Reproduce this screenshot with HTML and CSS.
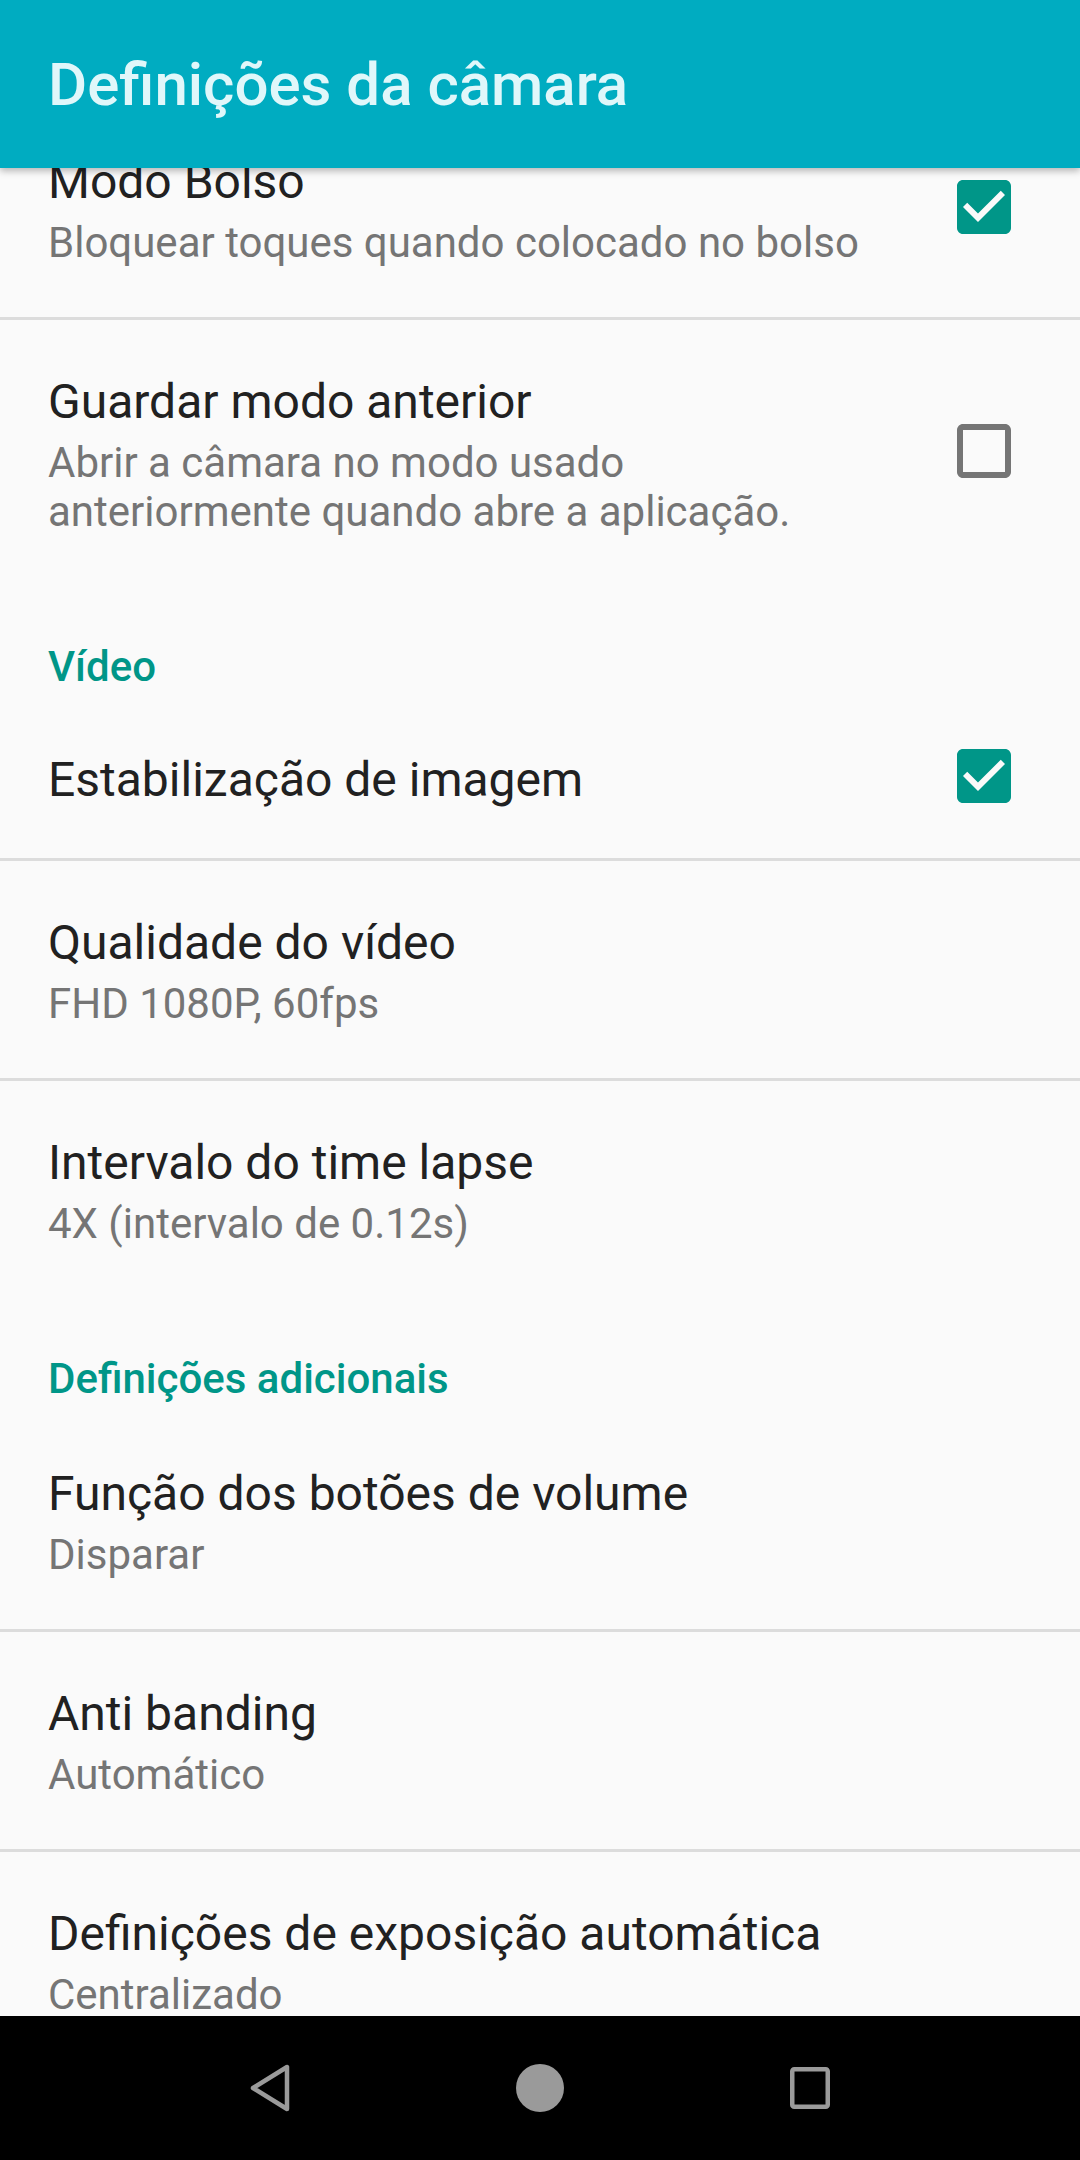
FILE: index.html
```html
<!DOCTYPE html>
<html lang="pt">
<head>
  <meta charset="UTF-8">
  <meta name="viewport" content="width=device-width, initial-scale=1.0">
  <title>Definições da câmara</title>
  <link rel="stylesheet" href="styles.css">
</head>
<body>
  <div class="screen">
    <header class="appbar">
      <h1>Definições da câmara</h1>
    </header>

    <main class="viewport">
      <div class="list">
        <!-- Camera -->
        <div class="pref divided">
          <div class="pref-text">
            <div class="pref-title">Modo Bolso</div>
            <div class="pref-summary">Bloquear toques quando colocado no bolso</div>
          </div>
          <div class="pref-widget">
            <svg class="checkbox" viewBox="3 3 18 18"><path class="on" d="M19 3H5c-1.11 0-2 .9-2 2v14c0 1.1.89 2 2 2h14c1.11 0 2-.9 2-2V5c0-1.1-.89-2-2-2zm-9 14l-5-5 1.41-1.41L10 14.17l7.59-7.59L19 8l-9 9z"/></svg>
          </div>
        </div>
        <div class="pref">
          <div class="pref-text">
            <div class="pref-title">Guardar modo anterior</div>
            <div class="pref-summary">Abrir a câmara no modo usado anteriormente quando abre a aplicação.</div>
          </div>
          <div class="pref-widget">
            <svg class="checkbox" viewBox="3 3 18 18"><path class="off" d="M19 5v14H5V5h14m0-2H5c-1.1 0-2 .9-2 2v14c0 1.1.9 2 2 2h14c1.1 0 2-.9 2-2V5c0-1.1-.9-2-2-2z"/></svg>
          </div>
        </div>

        <!-- Video -->
        <div class="category">Vídeo</div>
        <div class="pref single divided">
          <div class="pref-text">
            <div class="pref-title">Estabilização de imagem</div>
          </div>
          <div class="pref-widget">
            <svg class="checkbox" viewBox="3 3 18 18"><path class="on" d="M19 3H5c-1.11 0-2 .9-2 2v14c0 1.1.89 2 2 2h14c1.11 0 2-.9 2-2V5c0-1.1-.89-2-2-2zm-9 14l-5-5 1.41-1.41L10 14.17l7.59-7.59L19 8l-9 9z"/></svg>
          </div>
        </div>
        <div class="pref divided">
          <div class="pref-text">
            <div class="pref-title">Qualidade do vídeo</div>
            <div class="pref-summary">FHD 1080P, 60fps</div>
          </div>
        </div>
        <div class="pref">
          <div class="pref-text">
            <div class="pref-title">Intervalo do time lapse</div>
            <div class="pref-summary">4X (intervalo de 0.12s)</div>
          </div>
        </div>

        <!-- Extra -->
        <div class="category">Definições adicionais</div>
        <div class="pref divided">
          <div class="pref-text">
            <div class="pref-title">Função dos botões de volume</div>
            <div class="pref-summary">Disparar</div>
          </div>
        </div>
        <div class="pref divided">
          <div class="pref-text">
            <div class="pref-title">Anti banding</div>
            <div class="pref-summary">Automático</div>
          </div>
        </div>
        <div class="pref">
          <div class="pref-text">
            <div class="pref-title">Definições de exposição automática</div>
            <div class="pref-summary">Centralizado</div>
          </div>
        </div>
      </div>
    </main>

    <nav class="navbar">
      <div class="nav-btn">
        <svg viewBox="0 0 48 48"><polygon class="stroke" points="7,24 41,3 41,45"/></svg>
      </div>
      <div class="nav-btn">
        <svg viewBox="0 0 48 48"><circle class="fill" cx="24" cy="24" r="24"/></svg>
      </div>
      <div class="nav-btn">
        <svg viewBox="0 0 48 48"><rect class="stroke" x="6.25" y="5.25" width="35.5" height="37.5" rx="2"/></svg>
      </div>
    </nav>
  </div>
</body>
</html>
```

FILE: styles.css
```css
body {
  margin: 0;
  padding: 0;
  background-color: #fafafa;
  font-family: Roboto, "Noto Sans", Arial, sans-serif;
  color: #212121;
  overflow: hidden;
}
.screen {
  width: 1080px;
  height: 2160px;
  display: flex;
  flex-direction: column;
}
.appbar {
  flex-shrink: 0;
  height: 168px;
  background-color: #00acc1;
  display: flex;
  align-items: center;
  padding: 2px 48px 0;
  box-sizing: border-box;
  position: relative;
  z-index: 1;
  box-shadow: 0 3px 7px rgba(0, 0, 0, 0.28);
}
.appbar h1 {
  margin: 0;
  font-size: 60px;
  font-weight: 500;
  line-height: 70px;
  color: #e0f7fa;
}
.viewport {
  flex: 1;
  overflow: hidden;
}
.list {
  margin-top: -68px;
}
.pref {
  display: flex;
  align-items: center;
  padding: 54px 0 50px 48px;
}
.pref.single {
  padding-top: 52px;
  padding-bottom: 50px;
}
.pref.divided {
  border-bottom: 3px solid #dcdcdc;
}
.pref-text {
  flex: 1;
  min-width: 0;
}
.pref-title {
  font-size: 48px;
  line-height: 56px;
  color: #212121;
}
.pref-summary {
  margin-top: 8px;
  font-size: 42px;
  line-height: 49px;
  color: #757575;
}
.pref-widget {
  padding-left: 72px;
  padding-right: 69px;
  display: flex;
}
.checkbox {
  width: 54px;
  height: 54px;
  margin-top: -4px;
  margin-bottom: 4px;
}
.checkbox .on {
  fill: #009688;
}
.checkbox .off {
  fill: #757575;
}
.category {
  padding: 56px 48px 9px;
  font-size: 42px;
  font-weight: 500;
  line-height: 49px;
  color: #009688;
}
.navbar {
  flex-shrink: 0;
  height: 144px;
  background-color: #000;
  display: grid;
  grid-template-columns: repeat(3, 270px);
  padding: 0 135px;
  align-items: center;
  justify-items: center;
}
.nav-btn {
  display: flex;
}
.nav-btn svg {
  width: 48px;
  height: 48px;
}
.nav-btn .stroke {
  fill: none;
  stroke: #9a9a9a;
  stroke-width: 4.5;
  stroke-linejoin: round;
}
.nav-btn .fill {
  fill: #9a9a9a;
}
```
